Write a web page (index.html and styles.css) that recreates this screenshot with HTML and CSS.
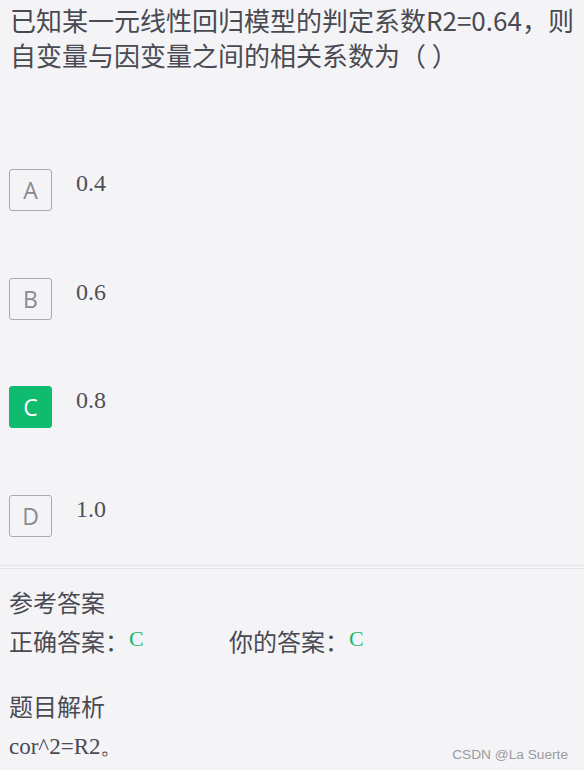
FILE: index.html
```html
<!DOCTYPE html>
<html lang="zh">
<head>
<meta charset="utf-8">
<link rel="stylesheet" href="styles.css">
</head>
<body>
<div class="page">
  <div class="question">已知某一元线性回归模型的判定系数R2=0.64，则自变量与因变量之间的相关系数为（ ）</div>
  <div class="options">
    <div class="option"><span class="letter">A</span><span class="value">0.4</span></div>
    <div class="option"><span class="letter">B</span><span class="value">0.6</span></div>
    <div class="option"><span class="letter correct">C</span><span class="value">0.8</span></div>
    <div class="option"><span class="letter">D</span><span class="value">1.0</span></div>
  </div>
  <div class="divider"></div>
  <div class="answer">
    <div class="label">参考答案</div>
    <div class="answer-row">
      <span class="group">正确答案：<span class="ans">C</span></span><span class="group">你的答案：<span class="ans">C</span></span>
    </div>
    <div class="label analysis-title">题目解析</div>
    <div class="analysis">cor^2=R2。</div>
  </div>
  <div class="watermark">CSDN @La Suerte</div>
</div>
</body>
</html>
```

FILE: styles.css
```css
html, body {
  margin: 0;
  padding: 0;
  background: #f4f4f7;
}
.page {
  position: relative;
  width: 584px;
  height: 770px;
  box-sizing: border-box;
  padding: 0 9px;
  font-family: "Noto Sans CJK SC", "Noto Sans", sans-serif;
  color: #4a4a52;
  overflow: hidden;
}
.question {
  font-size: 26px;
  line-height: 34.5px;
  padding: 3px 0 0 1px;
  margin-right: -9px;
}
.options {
  display: flex;
  flex-direction: column;
  gap: 66.5px;
  margin-top: 97px;
}
.option {
  display: flex;
  align-items: flex-start;
  height: 42px;
}
.letter {
  box-sizing: border-box;
  width: 43px;
  height: 42px;
  border: 1px solid #a9a9b1;
  border-radius: 3px;
  display: flex;
  align-items: center;
  justify-content: center;
  font-family: "Open Sans", "Noto Sans", sans-serif;
  font-size: 23px;
  color: #8a8a93;
}
.letter.correct {
  background: #0fbb6f;
  border-color: #0fbb6f;
  color: #ffffff;
}
.value {
  margin-left: 24px;
  font-family: "Liberation Serif", serif;
  font-size: 24px;
  line-height: 24px;
  color: #4f4f57;
  margin-top: 2px;
}
.divider {
  margin: 28px -9px 0;
  height: 2px;
  border-top: 1px solid #e3e3eb;
  border-bottom: 1px solid #e3e3eb;
}
.answer {
  padding-top: 15px;
}
.label {
  font-size: 24px;
  line-height: 36px;
}
.answer-row {
  font-size: 24px;
  line-height: 38px;
}
.group {
  display: inline-block;
  width: 220px;
}
.ans {
  font-family: "Liberation Serif", serif;
  font-size: 22px;
  color: #14b86e;
  vertical-align: 5px;
}
.analysis-title {
  margin-top: 28px;
}
.analysis {
  font-family: "Liberation Serif", serif;
  font-size: 23px;
  line-height: 36px;
  margin-top: 5px;
}
.watermark {
  position: absolute;
  right: 16px;
  bottom: 8px;
  font-family: "Liberation Sans", sans-serif;
  font-size: 13.7px;
  color: #9a9aa0;
}
```
